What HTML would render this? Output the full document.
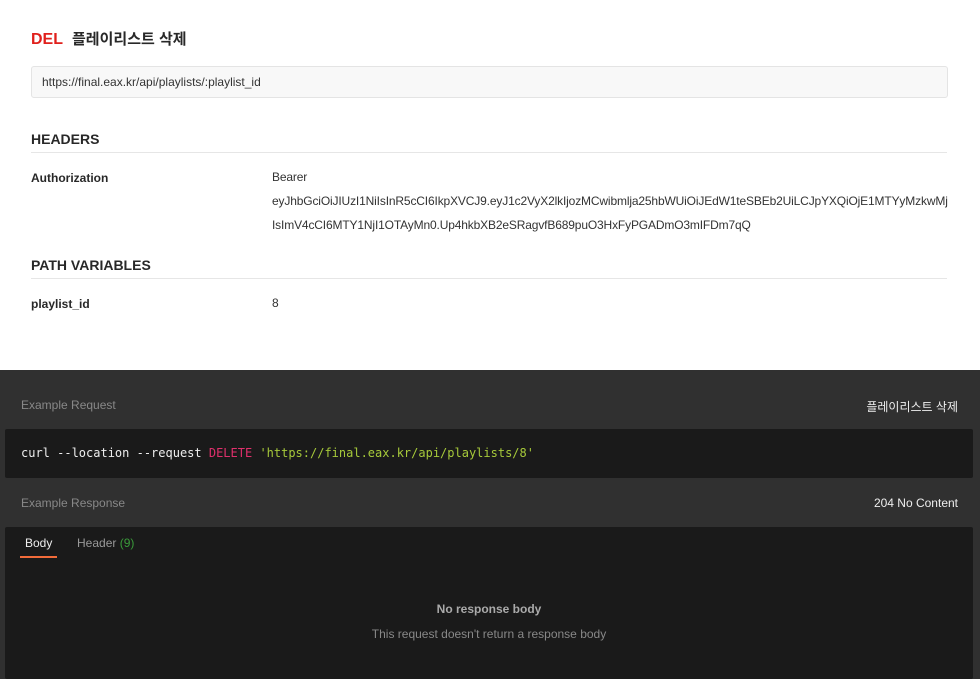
<!DOCTYPE html>
<html><head><meta charset="utf-8"><style>
body{margin:0;width:980px;height:679px;overflow:hidden;background:#fff;font-family:"Liberation Sans","Noto Sans CJK KR",sans-serif;color:#282828}
.top{position:relative;height:370px}
.abs{position:absolute;white-space:nowrap}
.t1{left:31px;top:28px;font-size:15px;font-weight:bold}
.t1 .m{color:#e0201c;margin-right:9px;font-size:16px}
.url{left:31px;top:66px;width:915px;height:30px;background:#f8f8f8;border:1px solid #e4e4e4;border-radius:3px;font-size:12px;line-height:30px;text-indent:10px;color:#333}
.h{left:31px;width:916px;font-size:14px;font-weight:bold;border-bottom:1px solid #e6e6e6;padding-bottom:5px}
.k{left:31px;font-size:12px;font-weight:bold}
.v{left:272px;font-size:12px;line-height:24px;color:#333}
.dark{position:absolute;left:0;top:370px;width:980px;height:309px;background:#303030;font-size:12px}
.lbl{color:#888}
.wt{color:#eee}
.code{position:absolute;left:5px;width:968px;background:#1a1a1a;border-radius:2px}
.mono{font-family:"DejaVu Sans Mono","Liberation Mono",monospace;font-size:12px;color:#eee}
</style></head><body>
<div class="top">
<div class="abs t1"><span class="m">DEL</span>플레이리스트 삭제</div>
<div class="abs url">https://final.eax.kr/api/playlists/:playlist_id</div>
<div class="abs h" style="top:131px">HEADERS</div>
<div class="abs k" style="top:171px">Authorization</div>
<div class="abs v" style="top:165px;letter-spacing:-0.15px">Bearer<br>eyJhbGciOiJIUzI1NiIsInR5cCI6IkpXVCJ9.eyJ1c2VyX2lkIjozMCwibmlja25hbWUiOiJEdW1teSBEb2UiLCJpYXQiOjE1MTYyMzkwMj<br>IsImV4cCI6MTY1NjI1OTAyMn0.Up4hkbXB2eSRagvfB689puO3HxFyPGADmO3mIFDm7qQ</div>
<div class="abs h" style="top:257px">PATH VARIABLES</div>
<div class="abs k" style="top:297px">playlist_id</div>
<div class="abs v" style="top:291px">8</div>
</div>
<div class="dark">
<div class="abs lbl" style="left:21px;top:28px">Example Request</div>
<div class="abs wt" style="right:22px;top:28px">플레이리스트 삭제</div>
<div class="code" style="top:59px;height:49px"><div class="abs mono" style="left:16px;top:17px">curl --location --request <span style="color:#e0306c">DELETE</span> <span style="color:#a6c93a">'https://final.eax.kr/api/playlists/8'</span></div></div>
<div class="abs lbl" style="left:21px;top:126px">Example Response</div>
<div class="abs wt" style="right:22px;top:126px">204 No Content</div>
<div class="code" style="top:157px;height:152px">
<div class="abs wt" style="left:20px;top:9px">Body</div>
<div style="position:absolute;left:15px;top:29px;width:37px;height:2px;background:#f26b3a"></div>
<div class="abs" style="left:72px;top:9px;color:#999">Header <span style="color:#3a9a3a">(9)</span></div>
<div class="abs" style="left:0;width:968px;text-align:center;top:75px;color:#aaa;font-weight:bold">No response body</div>
<div class="abs" style="left:0;width:968px;text-align:center;top:100px;color:#888">This request doesn't return a response body</div>
</div>
</div>
</body></html>
